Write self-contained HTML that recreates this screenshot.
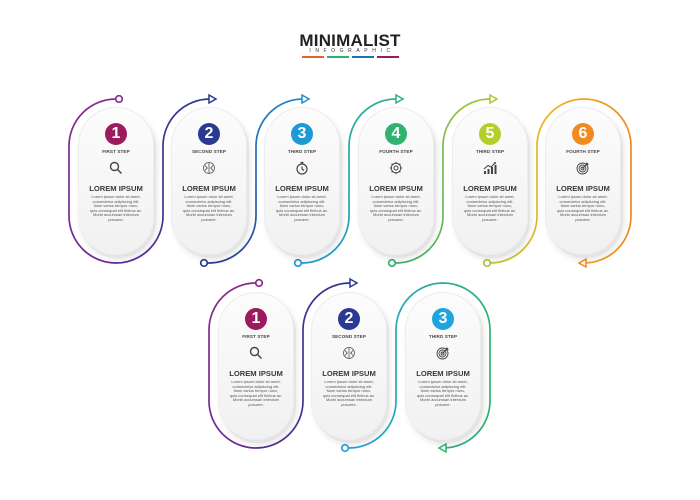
<!DOCTYPE html>
<html><head><meta charset="utf-8"><style>
*{margin:0;padding:0;box-sizing:border-box}
body{width:700px;height:500px;background:#fff;position:relative;overflow:hidden;font-family:"Liberation Sans",sans-serif}
.t{position:absolute;left:0;width:700px;text-align:center}
.card{position:absolute;width:76px;height:148px;border-radius:38px;background:linear-gradient(180deg,#fcfcfc,#f1f1f1);box-shadow:2px 3px 0 #e4e4e4,3px 5px 7px rgba(0,0,0,0.10),inset 0 0 0 1px #ededed}
.num{position:absolute;left:27px;top:16px;width:22px;height:22px;border-radius:50%;color:#fff;font-weight:bold;font-size:16px;line-height:22px;text-align:center}
.st{position:absolute;top:42px;left:0;width:76px;text-align:center;font-size:4.6px;font-weight:bold;color:#444;letter-spacing:0.1px}
.ic{position:absolute;top:54px;left:31px;width:14px;height:14px}
.h{position:absolute;top:77px;left:0;width:76px;text-align:center;font-size:7.6px;font-weight:bold;color:#3a3a3a}
.b{position:absolute;top:88px;left:0;width:76px;text-align:center;font-size:4px;line-height:4.5px;color:#555}
</style></head><body>
<div class="t" style="top:31px;font-size:17px;font-weight:900;color:#222;letter-spacing:0.2px">MINIMALIST</div>
<div class="t" style="top:48px;font-size:5px;letter-spacing:4.6px;color:#333;padding-left:4px">INFOGRAPHIC</div>
<div style="position:absolute;top:56px;left:302px;width:22px;height:2px;background:#e8632b"></div>
<div style="position:absolute;top:56px;left:327px;width:22px;height:2px;background:#2fb36e"></div>
<div style="position:absolute;top:56px;left:352px;width:22px;height:2px;background:#1f6fb8"></div>
<div style="position:absolute;top:56px;left:377px;width:22px;height:2px;background:#9c1b5f"></div>

<svg width="700" height="500" style="position:absolute;left:0;top:0" fill="none" stroke-width="1.7">
<defs>
<linearGradient id="g1" x1="0" y1="0" x2="0" y2="1"><stop offset="0" stop-color="#8a2b8f"/><stop offset="1" stop-color="#6a2b95"/></linearGradient>
<linearGradient id="g2" x1="0" y1="1" x2="1" y2="0"><stop offset="0" stop-color="#5a2b96"/><stop offset="1" stop-color="#2b3990"/></linearGradient>
<linearGradient id="g3" x1="0" y1="1" x2="1" y2="0"><stop offset="0" stop-color="#2b3990"/><stop offset="1" stop-color="#1f8fd0"/></linearGradient>
<linearGradient id="g4" x1="0" y1="1" x2="1" y2="0"><stop offset="0" stop-color="#1c9ad6"/><stop offset="1" stop-color="#2fb08a"/></linearGradient>
<linearGradient id="g5" x1="0" y1="1" x2="1" y2="0"><stop offset="0" stop-color="#3cb36a"/><stop offset="1" stop-color="#a8c83a"/></linearGradient>
<linearGradient id="g6" x1="0" y1="0" x2="1" y2="0"><stop offset="0" stop-color="#b8c92f"/><stop offset="0.5" stop-color="#f0b020"/><stop offset="1" stop-color="#f08a21"/></linearGradient>
<linearGradient id="h3" x1="0" y1="0" x2="1" y2="0"><stop offset="0" stop-color="#1ea5dd"/><stop offset="1" stop-color="#2fb36e"/></linearGradient>
</defs>
<path d="M116,99 A47,47 0 0 0 69,146 L69,216 A47,47 0 0 0 116,263" stroke="url(#g1)"/>
<circle cx="119" cy="99" r="3.3" stroke="#8a2b8f" fill="#fff"/>
<path d="M116,263 A47,47 0 0 0 163,216 L163,146 A47,47 0 0 1 210,99 L215,99" stroke="url(#g2)"/>
<path d="M209,95 L216,99 L209,103 Z" stroke="#2b3990" fill="#fff" stroke-width="1.5"/>
<path d="M207,263 L209,263 A47,47 0 0 0 256,216 L256,146 A47,47 0 0 1 303,99 L307,99" stroke="url(#g3)"/>
<path d="M302,95 L309,99 L302,103 Z" stroke="#1f8fd0" fill="#fff" stroke-width="1.5"/>
<circle cx="204" cy="263" r="3.3" stroke="#2b3990" fill="#fff"/>
<path d="M300,263 L302,263 A47,47 0 0 0 349,216 L349,146 A47,47 0 0 1 396,99 L400,99" stroke="url(#g4)"/>
<path d="M396,95 L403,99 L396,103 Z" stroke="#2fb08a" fill="#fff" stroke-width="1.5"/>
<circle cx="298" cy="263" r="3.3" stroke="#1c9ad6" fill="#fff"/>
<path d="M394,263 L396,263 A47,47 0 0 0 443,216 L443,146 A47,47 0 0 1 490,99 L494,99" stroke="url(#g5)"/>
<path d="M490,95 L497,99 L490,103 Z" stroke="#a8c83a" fill="#fff" stroke-width="1.5"/>
<circle cx="392" cy="263" r="3.3" stroke="#2fb36e" fill="#fff"/>
<path d="M488,263 L490,263 A47,47 0 0 0 537,216 L537,146 A47,47 0 0 1 584,99 A47,47 0 0 1 631,146 L631,216 A47,47 0 0 1 584,263 L580,263" stroke="url(#g6)"/>
<path d="M586,259 L579,263 L586,267 Z" stroke="#f08a21" fill="#fff" stroke-width="1.5"/>
<circle cx="487" cy="263" r="3.3" stroke="#a8c83a" fill="#fff"/>
<path d="M256,283 A47,47 0 0 0 209,330 L209,401 A47,47 0 0 0 256,448" stroke="url(#g1)"/>
<circle cx="259" cy="283" r="3.3" stroke="#8a2b8f" fill="#fff"/>
<path d="M256,448 A47,47 0 0 0 303,401 L303,330 A47,47 0 0 1 350,283 L354,283" stroke="url(#g2)"/>
<path d="M350,279 L357,283 L350,287 Z" stroke="#2b3990" fill="#fff" stroke-width="1.5"/>
<path d="M348,448 L349,448 A47,47 0 0 0 396,401 L396,330 A47,47 0 0 1 443,283 A47,47 0 0 1 490,330 L490,401 A47,47 0 0 1 443,448 L440,448" stroke="url(#h3)"/>
<path d="M446,444 L439,448 L446,452 Z" stroke="#2fb36e" fill="#fff" stroke-width="1.5"/>
<circle cx="345" cy="448" r="3.3" stroke="#1ea5dd" fill="#fff"/>
</svg>

<div class="card" style="left:78px;top:107px"><div class="num" style="background:#9c1b5f">1</div><div class="st">FIRST STEP</div>
<svg class="ic" viewBox="0 0 14 14" fill="none" stroke="#444" stroke-width="1.4"><circle cx="5.5" cy="5.5" r="4"/><path d="M8.5 8.5 L12.5 12.5"/></svg>
<div class="h">LOREM IPSUM</div><div class="b"></div></div>

<div class="card" style="left:171px;top:107px"><div class="num" style="background:#2b3990">2</div><div class="st">SECOND STEP</div>
<svg class="ic" viewBox="0 0 14 14" fill="none" stroke="#555" stroke-width="0.8"><circle cx="7" cy="7" r="5.5"/><path d="M7 1.5V12.5M3 4.5C5 6 5 8 3 9.5M11 4.5C9 6 9 8 11 9.5M4 7H6M8 7H10"/></svg>
<div class="h">LOREM IPSUM</div><div class="b"></div></div>

<div class="card" style="left:264px;top:107px"><div class="num" style="background:#1c9ad6">3</div><div class="st">THIRD STEP</div>
<svg class="ic" viewBox="0 0 14 14" fill="none" stroke="#444" stroke-width="1.2"><circle cx="7" cy="8" r="5"/><path d="M5.5 1.5H8.5M7 3V1.5M7 8V5.5M7 8L9 9.5"/></svg>
<div class="h">LOREM IPSUM</div><div class="b"></div></div>

<div class="card" style="left:358px;top:107px"><div class="num" style="background:#2fb36e">4</div><div class="st">FOURTH STEP</div>
<svg class="ic" viewBox="0 0 14 14" fill="none" stroke="#444" stroke-width="1"><circle cx="7" cy="7" r="2"/><circle cx="7" cy="7" r="4.8"/><path d="M7 0.8V2.2M7 11.8V13.2M0.8 7H2.2M11.8 7H13.2M2.6 2.6L3.6 3.6M10.4 10.4L11.4 11.4M2.6 11.4L3.6 10.4M10.4 3.6L11.4 2.6"/></svg>
<div class="h">LOREM IPSUM</div><div class="b"></div></div>

<div class="card" style="left:452px;top:107px"><div class="num" style="background:#b5cf2a">5</div><div class="st">THIRD STEP</div>
<svg class="ic" viewBox="0 0 14 14" fill="#444" stroke="none"><rect x="1" y="10" width="2" height="3"/><rect x="4.5" y="8" width="2" height="5"/><rect x="8" y="6" width="2" height="7"/><rect x="11.5" y="4" width="2" height="9"/><path d="M1 8L5 4.5L8 6L12 2" stroke="#444" stroke-width="1" fill="none"/><path d="M10.5 1.5L13 1L12.5 3.5Z"/></svg>
<div class="h">LOREM IPSUM</div><div class="b"></div></div>

<div class="card" style="left:545px;top:107px"><div class="num" style="background:#f18a21">6</div><div class="st">FOURTH STEP</div>
<svg class="ic" viewBox="0 0 14 14" fill="none" stroke="#444" stroke-width="0.9"><circle cx="6.5" cy="7.5" r="5.5"/><circle cx="6.5" cy="7.5" r="3.5"/><circle cx="6.5" cy="7.5" r="1.5"/><path d="M6.5 7.5L12 2M10.5 1.5V3.5H12.5"/></svg>
<div class="h">LOREM IPSUM</div><div class="b"></div></div>

<div class="card" style="left:218px;top:292px"><div class="num" style="background:#9c1b5f">1</div><div class="st">FIRST STEP</div>
<svg class="ic" viewBox="0 0 14 14" fill="none" stroke="#444" stroke-width="1.4"><circle cx="5.5" cy="5.5" r="4"/><path d="M8.5 8.5 L12.5 12.5"/></svg>
<div class="h">LOREM IPSUM</div><div class="b"></div></div>

<div class="card" style="left:311px;top:292px"><div class="num" style="background:#2b3990">2</div><div class="st">SECOND STEP</div>
<svg class="ic" viewBox="0 0 14 14" fill="none" stroke="#555" stroke-width="0.8"><circle cx="7" cy="7" r="5.5"/><path d="M7 1.5V12.5M3 4.5C5 6 5 8 3 9.5M11 4.5C9 6 9 8 11 9.5M4 7H6M8 7H10"/></svg>
<div class="h">LOREM IPSUM</div><div class="b"></div></div>

<div class="card" style="left:405px;top:292px"><div class="num" style="background:#1ea5dd">3</div><div class="st">THIRD STEP</div>
<svg class="ic" viewBox="0 0 14 14" fill="none" stroke="#444" stroke-width="0.9"><circle cx="6.5" cy="7.5" r="5.5"/><circle cx="6.5" cy="7.5" r="3.5"/><circle cx="6.5" cy="7.5" r="1.5"/><path d="M6.5 7.5L12 2M10.5 1.5V3.5H12.5"/></svg>
<div class="h">LOREM IPSUM</div><div class="b"></div></div>
<script>
document.querySelectorAll('.b').forEach(function(e){e.innerHTML='Lorem ipsum dolor sit amet,<br>consectetur adipiscing elit.<br>Nam varius tempor nunc,<br>quis consequat elit finibus ac.<br>Morbi accumsan interdum<br>posuere.';});
</script>
</body></html>
